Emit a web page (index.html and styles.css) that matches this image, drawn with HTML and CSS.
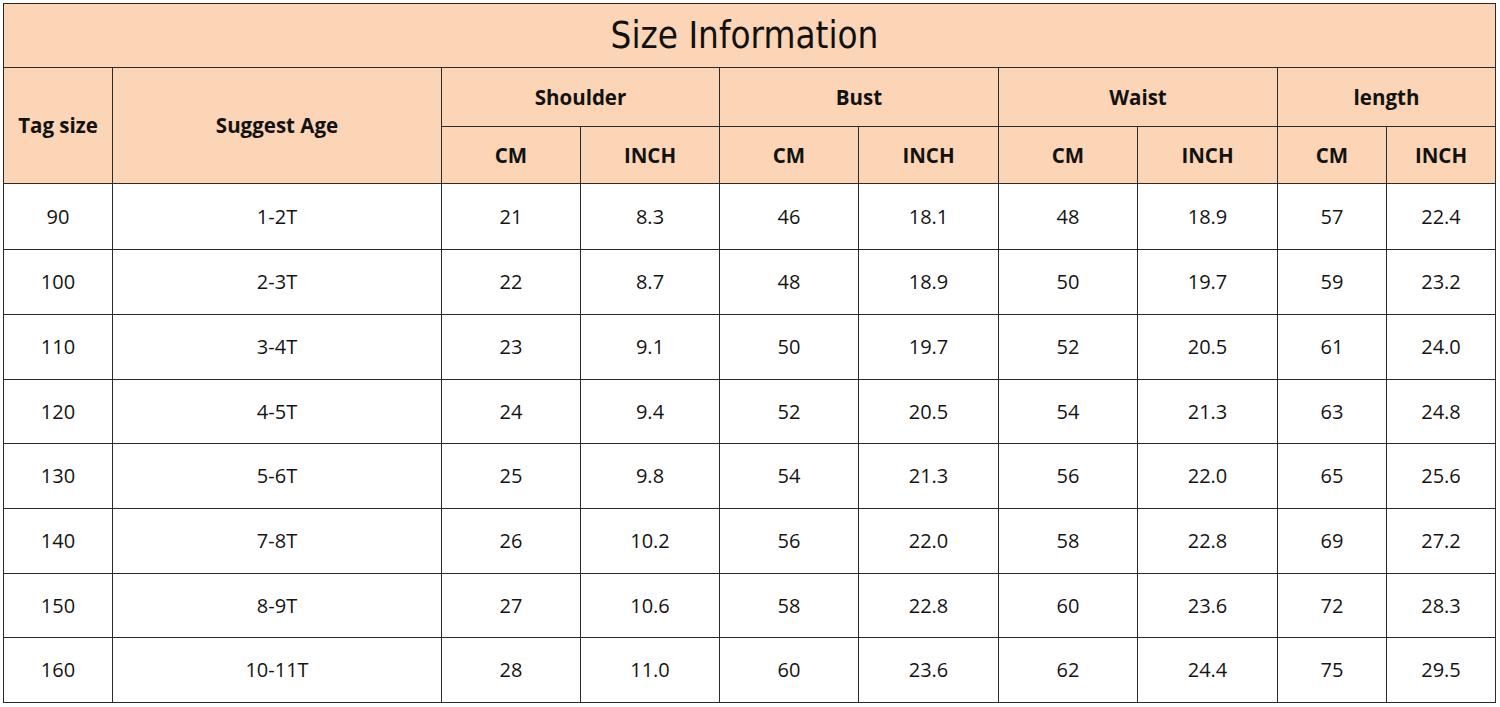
FILE: index.html
```html
<!DOCTYPE html>
<html lang="en">
<head>
<meta charset="utf-8">
<title>Size Information</title>
<link rel="stylesheet" href="styles.css">
</head>
<body>
<div class="sheet">
  <div class="cell head title">Size Information</div>

  <div class="cell head bold tall">Tag size</div>
  <div class="cell head bold tall">Suggest Age</div>
  <div class="cell head bold wide">Shoulder</div>
  <div class="cell head bold wide">Bust</div>
  <div class="cell head bold wide">Waist</div>
  <div class="cell head bold wide">length</div>

  <div class="cell head bold">CM</div><div class="cell head bold">INCH</div>
  <div class="cell head bold">CM</div><div class="cell head bold">INCH</div>
  <div class="cell head bold">CM</div><div class="cell head bold">INCH</div>
  <div class="cell head bold">CM</div><div class="cell head bold">INCH</div>

  <div class="cell">90</div><div class="cell">1-2T</div><div class="cell">21</div><div class="cell">8.3</div><div class="cell">46</div><div class="cell">18.1</div><div class="cell">48</div><div class="cell">18.9</div><div class="cell">57</div><div class="cell">22.4</div>
  <div class="cell">100</div><div class="cell">2-3T</div><div class="cell">22</div><div class="cell">8.7</div><div class="cell">48</div><div class="cell">18.9</div><div class="cell">50</div><div class="cell">19.7</div><div class="cell">59</div><div class="cell">23.2</div>
  <div class="cell">110</div><div class="cell">3-4T</div><div class="cell">23</div><div class="cell">9.1</div><div class="cell">50</div><div class="cell">19.7</div><div class="cell">52</div><div class="cell">20.5</div><div class="cell">61</div><div class="cell">24.0</div>
  <div class="cell">120</div><div class="cell">4-5T</div><div class="cell">24</div><div class="cell">9.4</div><div class="cell">52</div><div class="cell">20.5</div><div class="cell">54</div><div class="cell">21.3</div><div class="cell">63</div><div class="cell">24.8</div>
  <div class="cell">130</div><div class="cell">5-6T</div><div class="cell">25</div><div class="cell">9.8</div><div class="cell">54</div><div class="cell">21.3</div><div class="cell">56</div><div class="cell">22.0</div><div class="cell">65</div><div class="cell">25.6</div>
  <div class="cell">140</div><div class="cell">7-8T</div><div class="cell">26</div><div class="cell">10.2</div><div class="cell">56</div><div class="cell">22.0</div><div class="cell">58</div><div class="cell">22.8</div><div class="cell">69</div><div class="cell">27.2</div>
  <div class="cell">150</div><div class="cell">8-9T</div><div class="cell">27</div><div class="cell">10.6</div><div class="cell">58</div><div class="cell">22.8</div><div class="cell">60</div><div class="cell">23.6</div><div class="cell">72</div><div class="cell">28.3</div>
  <div class="cell">160</div><div class="cell">10-11T</div><div class="cell">28</div><div class="cell">11.0</div><div class="cell">60</div><div class="cell">23.6</div><div class="cell">62</div><div class="cell">24.4</div><div class="cell">75</div><div class="cell">29.5</div>
</div>
</body>
</html>
```

FILE: styles.css
```css
html, body {
  margin: 0;
  padding: 0;
  background: #ffffff;
}

body {
  padding: 3px 0 0 3px;
  font-family: "Open Sans", "Liberation Sans", sans-serif;
  color: #141414;
}

.sheet {
  display: grid;
  width: 1491px;
  grid-template-columns: 108px 328px 138px 138px 138px 139px 138px 139px 108px 108px;
  grid-template-rows: 63px 58px 56px 65px 64px 64px 63px 64px 64px 63px 64px;
  gap: 1px;
  padding: 1px;
  background: #2a2a2a;
}

.cell {
  background: #ffffff;
  display: flex;
  align-items: center;
  justify-content: center;
  font-size: 20px;
  line-height: 1;
}

.head {
  background: #fbd5b5;
}

.bold {
  font-weight: 700;
  font-size: 20.5px;
  color: #121212;
}

.title {
  grid-column: 1 / -1;
  font-family: "DejaVu Sans Condensed", "DejaVu Sans", "Liberation Sans", sans-serif;
  font-stretch: condensed;
  font-size: 36.5px;
  padding: 1px 10px 0 0;
  color: #111111;
}

.tall {
  grid-row: span 2;
}

.wide {
  grid-column: span 2;
}
```
